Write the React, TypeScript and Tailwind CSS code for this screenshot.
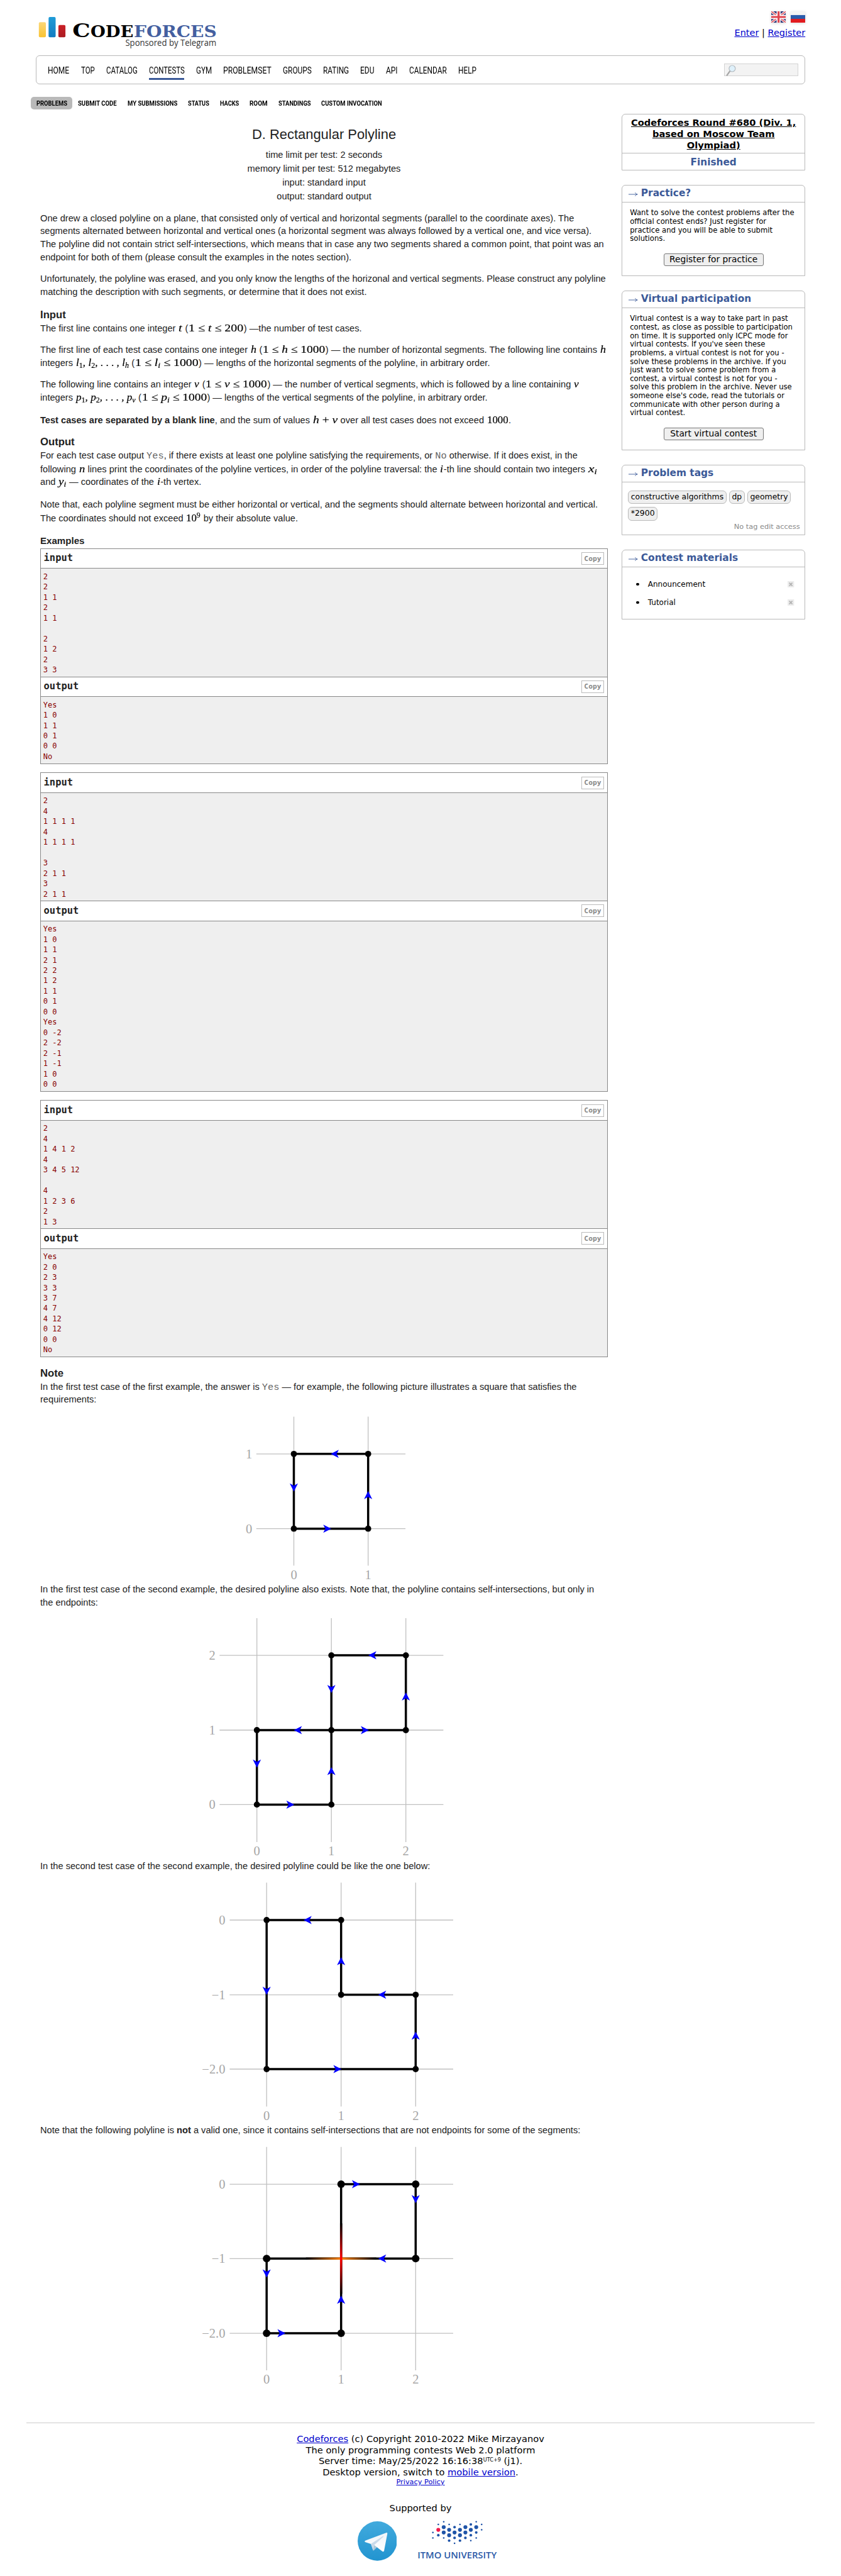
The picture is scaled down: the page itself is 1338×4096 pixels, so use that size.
import React, { useLayoutEffect, useRef, useState } from "react";
import type { ReactNode } from "react";

/* A run of text condensed or widened to an exact width. */
function Fit({ w, className = "", children }: { w: number; className?: string; children: ReactNode }) {
  const ref = useRef<HTMLSpanElement>(null);
  const [scale, setScale] = useState(1);
  useLayoutEffect(() => {
    if (ref.current) {
      const n = ref.current.getBoundingClientRect().width;
      if (n > 0) setScale(w / n);
    }
  }, [w]);
  return (
    <span className={"inline-block text-left whitespace-nowrap " + className} style={{ width: w }}>
      <span ref={ref} className="inline-block origin-left" style={{ transform: `scaleX(${scale})` }}>
        {children}
      </span>
    </span>
  );
}

function M({ w, children }: { w: number; children: ReactNode }) {
  return (
    <Fit w={w} className="mx-[0.6px] font-['Liberation_Serif',serif] text-[16.8px] leading-none text-black [-webkit-text-stroke:0.2px_black]">
      {children}
    </Fit>
  );
}
const Sub = ({ children }: { children: ReactNode }) => (
  <span className="relative top-[3px] text-[11.8px] leading-none">{children}</span>
);
const TT = ({ children }: { children: ReactNode }) => (
  <span className="font-['Liberation_Mono',monospace] text-[15.3px] leading-none text-[#666]">{children}</span>
);

function Line({ h = "h-[20.58px]", children }: { h?: string; children: ReactNode }) {
  return <div className={h + " whitespace-nowrap leading-[20.58px]"}>{children}</div>;
}
function Heading({ className = "", children }: { className?: string; children: ReactNode }) {
  return <h2 className={"h-5 text-[16.7px] leading-5 font-bold " + className}>{children}</h2>;
}

const NAV: [string, number][] = [
  ["HOME", 34.2], ["TOP", 21.7], ["CATALOG", 49.8], ["CONTESTS", 56.8], ["GYM", 25.1], ["PROBLEMSET", 76.7],
  ["GROUPS", 45.9], ["RATING", 41.2], ["EDU", 22.5], ["API", 18.6], ["CALENDAR", 59.8], ["HELP", 29],
];
const SUBNAV: [string, number][] = [
  ["SUBMIT CODE", 61.5], ["MY SUBMISSIONS", 79.3], ["STATUS", 33.8], ["HACKS", 30.3], ["ROOM", 28.6],
  ["STANDINGS", 51.6], ["CUSTOM INVOCATION", 96.6],
];

function Logo() {
  return (
    <svg width="290" height="60" viewBox="61 20 290 60" className="overflow-visible">
      <defs>
        <linearGradient id="ly" x1="0" y1="0" x2="0" y2="1"><stop offset="0" stopColor="#fbd778" /><stop offset="1" stopColor="#f9c332" /></linearGradient>
        <linearGradient id="lb" x1="0" y1="0" x2="0" y2="1"><stop offset="0" stopColor="#1f9cd8" /><stop offset="1" stopColor="#137bc0" /></linearGradient>
        <linearGradient id="lr" x1="0" y1="0" x2="0" y2="1"><stop offset="0" stopColor="#cb2027" /><stop offset="1" stopColor="#aa1c22" /></linearGradient>
      </defs>
      <rect x="61.8" y="35.2" width="11.2" height="24.1" rx="2" fill="url(#ly)" />
      <rect x="77.3" y="27" width="11.2" height="32.3" rx="2" fill="url(#lb)" />
      <rect x="92.9" y="39.7" width="11.2" height="19.6" rx="2" fill="url(#lr)" />
      <g fontFamily="'DejaVu Serif', serif" fontWeight="bold">
        <text x="115.2" y="58.7" fontSize="30.5" textLength="28.5" lengthAdjust="spacingAndGlyphs">C</text>
        <text x="144" y="58.7" fontSize="25.6" textLength="68.4" lengthAdjust="spacingAndGlyphs">ODE</text>
        <text x="213" y="58.7" fontSize="25.6" fill="#445fa0" textLength="131.8" lengthAdjust="spacingAndGlyphs">FORCES</text>
      </g>
      <text x="199.4" y="73.2" fontSize="13.9" fill="#333" fontFamily="'Open Sans', sans-serif" textLength="144.8" lengthAdjust="spacingAndGlyphs">Sponsored by Telegram</text>
    </svg>
  );
}

function Flags() {
  return (
    <div className="flex gap-[7.4px]">
      <svg width="23.4" height="18" viewBox="0 0 26 20" className="drop-shadow-sm">
        <rect width="26" height="20" fill="#2b3577" />
        <path d="M0 0L26 20M26 0L0 20" stroke="#f3e6ea" strokeWidth="4.4" />
        <path d="M0 0L26 20M26 0L0 20" stroke="#e0525c" strokeWidth="1.6" />
        <path d="M13 0V20M0 10H26" stroke="#fff" strokeWidth="7" />
        <path d="M13 0V20M0 10H26" stroke="#e0444f" strokeWidth="3.6" />
      </svg>
      <svg width="23.4" height="18" viewBox="0 0 26 20" className="drop-shadow-sm">
        <rect width="26" height="7" fill="#f4f4f4" />
        <rect y="6.6" width="26" height="7" fill="#2a5cab" />
        <rect y="13.3" width="26" height="6.7" fill="#e21b1f" />
      </svg>
    </div>
  );
}

function Pre({ text }: { text: string }) {
  return (
    <pre className="bg-[#efefef] pt-[4.6px] pb-[2.2px] pl-[3.8px] font-['DejaVu_Sans_Mono',monospace] text-[12px] leading-[16.45px] text-[#880000]">
      {text}
    </pre>
  );
}
function BoxTitle({ children }: { children: ReactNode }) {
  return (
    <div className="flex h-[32.4px] items-center justify-between border-y border-[#888] pr-[5.3px] pl-[4.6px]">
      <span className="font-['DejaVu_Sans_Mono',monospace] text-[15.4px] leading-none font-bold">{children}</span>
      <span className="flex h-[19.8px] w-[35.5px] items-center justify-center border border-[#bbb] font-['DejaVu_Sans_Mono',monospace] text-[11.3px] leading-none font-bold text-[#888]">
        Copy
      </span>
    </div>
  );
}
function Example({ input, output }: { input: string; output: string }) {
  return (
    <div className="mb-[13.9px] border-x border-b border-[#888]">
      <BoxTitle>input</BoxTitle>
      <Pre text={input} />
      <BoxTitle>output</BoxTitle>
      <Pre text={output} />
    </div>
  );
}

type Pt = [number, number];
interface PlotProps {
  top: number;
  h: number;
  xs: number[];
  ys: number[];
  x0: number;
  x1: number;
  y0: number;
  y1: number;
  yLabels: string[];
  yLabelX: number;
  xLabelY: number;
  segs: [Pt, Pt][];
  dots: Pt[];
  r?: number;
  at?: number;
  cross?: boolean;
}
function Plot(p: PlotProps) {
  const { r = 4.9, at = 0.5 } = p;
  const pt = (q: Pt): Pt => [p.xs[q[0]], p.ys[q[1]]];
  return (
    <svg className="block" width="903" height={p.h} viewBox={`64 ${p.top} 903 ${p.h}`}>
      {p.xs.map((x, i) => <line key={i} x1={x} x2={x} y1={p.y0} y2={p.y1} stroke="#c0c0c0" strokeWidth="1.3" />)}
      {p.ys.map((y, i) => <line key={i} x1={p.x0} x2={p.x1} y1={y} y2={y} stroke="#c0c0c0" strokeWidth="1.3" />)}
      <g fontFamily="'Liberation Serif', serif" fontSize="20.5" fill="#a6a6a6">
        {p.xs.map((x, i) => <text key={i} x={x} y={p.xLabelY} textAnchor="middle">{i}</text>)}
        {p.ys.map((y, i) => <text key={i} x={p.yLabelX} y={y + 7} textAnchor="end">{p.yLabels[i]}</text>)}
      </g>
      {p.segs.map(([a, b], i) => {
        const [ax, ay] = pt(a);
        const [bx, by] = pt(b);
        return <line key={i} x1={ax} y1={ay} x2={bx} y2={by} stroke="#000" strokeWidth="3.5" />;
      })}
      {p.cross && (
        <>
          <defs>
            <linearGradient id="co" gradientUnits="userSpaceOnUse" x1={p.xs[1] - 56} x2={p.xs[1] + 56} y1="0" y2="0">
              <stop offset="0" stopColor="#000" /><stop offset="0.5" stopColor="#ff8000" /><stop offset="1" stopColor="#000" />
            </linearGradient>
            <linearGradient id="cr" gradientUnits="userSpaceOnUse" y1={p.ys[1] - 56} y2={p.ys[1] + 56} x1="0" x2="0">
              <stop offset="0" stopColor="#000" /><stop offset="0.5" stopColor="#ff0000" /><stop offset="1" stopColor="#000" />
            </linearGradient>
          </defs>
          <rect x={p.xs[1] - 56} y={p.ys[1] - 1.75} width="112" height="3.5" fill="url(#co)" />
          <rect x={p.xs[1] - 1.75} y={p.ys[1] - 56} width="3.5" height="112" fill="url(#cr)" />
        </>
      )}
      {p.dots.map((d, i) => <circle key={i} cx={pt(d)[0]} cy={pt(d)[1]} r={r} />)}
      {p.segs.map(([a, b], i) => {
        const [ax, ay] = pt(a);
        const [bx, by] = pt(b);
        const ang = (Math.atan2(by - ay, bx - ax) * 180) / Math.PI;
        return (
          <path
            key={i}
            fill="#0000ff"
            d="M0.5 0L-12.4 6.5L-9 0L-12.4 -6.5Z"
            transform={`translate(${ax + (bx - ax) * at} ${ay + (by - ay) * at}) rotate(${ang})`}
          />
        );
      })}
    </svg>
  );
}

function SideBox({ title, h, children }: { title: string; h: string; children: ReactNode }) {
  return (
    <section className={"mb-[22.6px] rounded-t-[6px] border border-[#b9b9b9] " + h}>
      <div className="flex h-[27.4px] items-center border-b border-[#b9b9b9] pl-[8.4px] text-[#3b5998]">
        <svg width="17" height="10" viewBox="0 0 17 10" fill="none" stroke="currentColor" strokeWidth="0.9" className="mt-[3px]">
          <path d="M1 5H15M11.6 2.2C12.3 4 13.6 4.8 15.2 5C13.6 5.2 12.3 6 11.6 7.8" />
        </svg>
        <span className="ml-[4.2px] text-[15.4px] leading-none font-bold">{title}</span>
      </div>
      {children}
    </section>
  );
}
function SideLines({ lines }: { lines: string[] }) {
  return (
    <div className="pt-[10.2px] pl-[12px] text-[11.67px] leading-[13.64px]">
      {lines.map((l) => <div key={l} className="whitespace-nowrap">{l}</div>)}
    </div>
  );
}
const SideButton = ({ children }: { children: ReactNode }) => (
  <div className="mx-auto flex h-[20.2px] w-[159px] items-center justify-center rounded-[3px] border border-[#767676] bg-[#efefef] text-[13.8px] leading-none whitespace-nowrap">
    {children}
  </div>
);
const Tag = ({ children }: { children: ReactNode }) => (
  <span className="flex h-[21.6px] items-center rounded-[6px] border border-[#b9b9b9] bg-[#efefef] px-[3.5px] text-[12.46px] leading-none whitespace-nowrap">
    {children}
  </span>
);
const Material = ({ children }: { children: ReactNode }) => (
  <li className="flex h-[29px] items-center pr-[16.7px] pl-[22px] text-[12px] leading-none">
    <span className="mr-[14.2px] size-[4.4px] rounded-full bg-black" />
    <span className="flex-1">{children}</span>
    <svg width="10.3" height="10.3" viewBox="0 0 10 10">
      <rect width="10" height="10" fill="#ececec" />
      <path d="M2.6 2.6L7.4 7.4M7.4 2.6L2.6 7.4" stroke="#b4b4b4" strokeWidth="1.8" />
    </svg>
  </li>
);

const ITMO: [number, number, number][] = [
  [0, 4, 1.3], [0, 6, 1.3], [1, 1, 1.3], [1, 3, 3.1], [1, 5, 2.1], [2, 0, 1.3], [2, 2, 3.1], [2, 4, 3.1], [2, 6, 1.3],
  [3, 1, 1.3], [3, 3, 3.1], [3, 5, 3.1], [3, 7, 2.1], [4, 2, 2.1], [4, 4, 3.1], [4, 6, 2.1], [4, 8, 1.3], [5, 1, 1.3],
  [5, 3, 3.1], [5, 5, 3.1], [5, 7, 2.1], [6, 2, 3.1], [6, 4, 3.1], [6, 6, 2.1], [7, 1, 2.1], [7, 3, 3.1], [7, 5, 2.1],
  [7, 7, 1.3], [8, 0, 1.3], [8, 2, 3.1], [8, 4, 2.1], [8, 6, 1.3], [9, 1, 1.3], [9, 3, 1.3],
];

const A = ({ children }: { children: ReactNode }) => <a className="text-[#0000cc] underline">{children}</a>;

export default function App() {
  return (
    <div className="h-[4096px] w-[1338px] overflow-hidden bg-white font-['DejaVu_Sans',sans-serif] text-black">
      <header className="flex h-[88px] justify-between pr-[56.8px] pl-[61px]">
        <div className="pt-[20px]"><Logo /></div>
        <div className="flex flex-col items-end pt-[18.1px]">
          <Flags />
          <div className="mt-[8.2px] text-[14.5px] leading-[16.8px] whitespace-nowrap">
            <A>Enter</A> | <A>Register</A>
          </div>
        </div>
      </header>

      <nav className="mr-[56.8px] ml-[56.9px] flex h-[45.5px] justify-between rounded-[6px] border border-[#b9b9b9] pr-[10.3px] pl-[18.5px]">
        <div className="flex gap-[18.2px] pt-[13.1px] font-[Roboto] text-[15px] leading-[20px]">
          {NAV.map(([t, w]) => (
            <div key={t} className={t === "CONTESTS" ? "h-[24.5px] border-b-[3px] border-[#3b5998]" : ""}>
              <Fit w={w}>{t}</Fit>
            </div>
          ))}
        </div>
        <div className="mt-[11.6px] h-[20.8px] w-[118px] border border-[#d3d3d3] bg-[#f3f3f3] pl-[2px]">
          <svg width="17" height="19" viewBox="0 0 17 19">
            <path d="M1.6 17.6L6.6 10.6" stroke="#a5a5a5" strokeWidth="2.2" strokeLinecap="round" />
            <circle cx="9.9" cy="7" r="5" fill="#dff1fb" stroke="#b4bcc2" strokeWidth="1.2" />
          </svg>
        </div>
      </nav>

      <div className="mt-[20.3px] ml-[49.1px] flex h-[20.7px] items-center gap-[17px] font-[Roboto] text-[11.6px] leading-[20.7px] font-bold">
        <div className="-mr-[8px] h-[20.7px] rounded-[5px] bg-[#b9b9b9] px-[8.5px]"><Fit w={49}>PROBLEMS</Fit></div>
        {SUBNAV.map(([t, w]) => <Fit key={t} w={w}>{t}</Fit>)}
      </div>

      <div className="mt-[6.5px] flex h-[3671.4px]">
        <main className="ml-[64px] w-[903px] shrink-0 pt-[21.2px] font-['Liberation_Sans',sans-serif] text-[14.63px] text-[#222]">
          <h1 className="h-[33px] text-center text-[21.95px] leading-[24px]">D. Rectangular Polyline</h1>
          <div className="mb-[13.6px] text-center leading-[22px]">
            <div>time limit per test: 2 seconds</div>
            <div>memory limit per test: 512 megabytes</div>
            <div>input: standard input</div>
            <div>output: standard output</div>
          </div>

          <div className="mb-[14px]">
            <Line>One drew a closed polyline on a plane, that consisted only of vertical and horizontal segments (parallel to the coordinate axes). The</Line>
            <Line>segments alternated between horizontal and vertical ones (a horizontal segment was always followed by a vertical one, and vice versa).</Line>
            <Line>The polyline did not contain strict self-intersections, which means that in case any two segments shared a common point, that point was an</Line>
            <Line>endpoint for both of them (please consult the examples in the notes section).</Line>
          </div>
          <div>
            <Line>Unfortunately, the polyline was erased, and you only know the lengths of the horizonal and vertical segments. Please construct any polyline</Line>
            <Line>matching the description with such segments, or determine that it does not exist.</Line>
          </div>

          <Heading className="mt-[16.4px] mb-[1px]">Input</Heading>
          <Line>The first line contains one integer <M w={5.7}><i>t</i></M> (<M w={87.3}>1 ≤ <i>t</i> ≤ 200</M>) —the number of test cases.</Line>
          <div className="mt-[14.1px]">
            <Line>The first line of each test case contains one integer <M w={9}><i>h</i></M> (<M w={99.3}>1 ≤ <i>h</i> ≤ 1000</M>) — the number of horizontal segments. The following line contains <M w={9}><i>h</i></M></Line>
            <Line>integers <M w={84}><i>l</i><Sub>1</Sub>, <i>l</i><Sub>2</Sub>, . . . , <i>l</i><Sub><i>h</i></Sub></M> (<M w={100.7}>1 ≤ <i>l</i><Sub><i>i</i></Sub> ≤ 1000</M>) — lengths of the horizontal segments of the polyline, in arbitrary order.</Line>
          </div>
          <div className="mt-[13.8px]">
            <Line>The following line contains an integer <M w={7.7}><i>v</i></M> (<M w={97.7}>1 ≤ <i>v</i> ≤ 1000</M>) — the number of vertical segments, which is followed by a line containing <M w={7.7}><i>v</i></M></Line>
            <Line>integers <M w={94.7}><i>p</i><Sub>1</Sub>, <i>p</i><Sub>2</Sub>, . . . , <i>p</i><Sub><i>v</i></Sub></M> (<M w={103.3}>1 ≤ <i>p</i><Sub><i>i</i></Sub> ≤ 1000</M>) — lengths of the vertical segments of the polyline, in arbitrary order.</Line>
          </div>
          <div className="mt-[15.5px]">
            <Line><b>Test cases are separated by a blank line</b>, and the sum of values <M w={39.3}><i>h</i> + <i>v</i></M> over all test cases does not exceed <M w={33.7}>1000</M>.</Line>
          </div>

          <Heading className="mt-[15px] mb-[0.7px]">Output</Heading>
          <Line h="h-[22px]">For each test case output <TT>Yes</TT>, if there exists at least one polyline satisfying the requirements, or <TT>No</TT> otherwise. If it does exist, in the</Line>
          <Line h="h-[19.7px]">following <M w={9.3}><i>n</i></M> lines print the coordinates of the polyline vertices, in order of the polyline traversal: the <M w={5}><i>i</i></M>-th line should contain two integers <M w={13.7}><i>x</i><Sub><i>i</i></Sub></M></Line>
          <Line>and <M w={12.3}><i>y</i><Sub><i>i</i></Sub></M> — coordinates of the <M w={5}><i>i</i></M>-th vertex.</Line>
          <div className="mt-[15.1px]">
            <Line h="h-[22.3px]">Note that, each polyline segment must be either horizontal or vertical, and the segments should alternate between horizontal and vertical.</Line>
            <Line>The coordinates should not exceed <M w={22.7}>10<span className="relative -top-[6px] text-[11.8px] leading-none">9</span></M> by their absolute value.</Line>
          </div>

          <h2 className="mt-[15.7px] h-[21.9px] text-[15.09px] leading-5 font-bold">Examples</h2>
          <Example input={"2\n2\n1 1\n2\n1 1\n\n2\n1 2\n2\n3 3"} output={"Yes\n1 0\n1 1\n0 1\n0 0\nNo"} />
          <Example
            input={"2\n4\n1 1 1 1\n4\n1 1 1 1\n\n3\n2 1 1\n3\n2 1 1"}
            output={"Yes\n1 0\n1 1\n2 1\n2 2\n1 2\n1 1\n0 1\n0 0\nYes\n0 -2\n2 -2\n2 -1\n1 -1\n1 0\n0 0"}
          />
          <Example
            input={"2\n4\n1 4 1 2\n4\n3 4 5 12\n\n4\n1 2 3 6\n2\n1 3"}
            output={"Yes\n2 0\n2 3\n3 3\n3 7\n4 7\n4 12\n0 12\n0 0\nNo"}
          />

          <Heading className="mt-[16px] mb-[0.7px]">Note</Heading>
          <Line>In the first test case of the first example, the answer is <TT>Yes</TT> — for example, the following picture illustrates a square that satisfies the</Line>
          <Line>requirements:</Line>
          <Plot
            top={2236.8} h={281.5} xs={[467.5, 585.7]} ys={[2431.5, 2312.6]} x0={407.8} x1={645.1} y0={2253.4} y1={2490.2}
            yLabels={["0", "1"]} yLabelX={401.3} xLabelY={2512.3}
            segs={[[[0, 0], [1, 0]], [[1, 0], [1, 1]], [[1, 1], [0, 1]], [[0, 1], [0, 0]]]}
            dots={[[0, 0], [1, 0], [1, 1], [0, 1]]}
          />
          <Line>In the first test case of the second example, the desired polyline also exists. Note that, the polyline contains self-intersections, but only in</Line>
          <Line>the endpoints:</Line>
          <Plot
            top={2559.5} h={399.1} xs={[408.7, 527.2, 645.7]} ys={[2870.9, 2752.5, 2633.6]} x0={349.3} x1={705.4} y0={2574.5} y1={2930.5}
            yLabels={["0", "1", "2"]} yLabelX={342.8} xLabelY={2951.8}
            segs={[
              [[0, 0], [1, 0]], [[1, 0], [1, 1]], [[1, 1], [2, 1]], [[2, 1], [2, 2]],
              [[2, 2], [1, 2]], [[1, 2], [1, 1]], [[1, 1], [0, 1]], [[0, 1], [0, 0]],
            ]}
            dots={[[0, 0], [1, 0], [1, 1], [2, 1], [2, 2], [1, 2], [0, 1]]}
          />
          <Line>In the second test case of the second example, the desired polyline could be like the one below:</Line>
          <Plot
            top={2979.2} h={398.9} xs={[424.2, 542.7, 661.3]} ys={[3054.2, 3173, 3291.2]} x0={365.4} x1={721} y0={2994.8} y1={3350.6}
            yLabels={["0", "−1", "−2.0"]} yLabelX={358.5} xLabelY={3372}
            segs={[
              [[0, 2], [2, 2]], [[2, 2], [2, 1]], [[2, 1], [1, 1]], [[1, 1], [1, 0]], [[1, 0], [0, 0]], [[0, 0], [0, 2]],
            ]}
            dots={[[0, 2], [2, 2], [2, 1], [1, 1], [1, 0], [0, 0]]}
          />
          <Line>Note that the following polyline is <b>not</b> a valid one, since it contains self-intersections that are not endpoints for some of the segments:</Line>
          <Plot
            top={3398.7} h={440} xs={[424.2, 542.7, 661.3]} ys={[3473.8, 3592, 3710.8]} x0={365.4} x1={721} y0={3414.4} y1={3769.6}
            yLabels={["0", "−1", "−2.0"]} yLabelX={358.5} xLabelY={3791}
            segs={[
              [[0, 2], [1, 2]], [[1, 2], [1, 0]], [[1, 0], [2, 0]], [[2, 0], [2, 1]], [[2, 1], [0, 1]], [[0, 1], [0, 2]],
            ]}
            dots={[[0, 2], [1, 2], [1, 0], [2, 0], [2, 1], [0, 1]]}
            r={6} at={0.25} cross
          />
        </main>

        <aside className="ml-[22.2px] w-[292px] shrink-0">
          <section className="mb-[22.6px] h-[90.1px] rounded-t-[6px] border border-[#b9b9b9] text-center font-bold">
            <div className="h-[61.7px] border-b border-[#b9b9b9] pt-[4.2px] text-[14.7px] leading-[17.8px] underline">
              <div>Codeforces Round #680 (Div. 1,</div>
              <div>based on Moscow Team</div>
              <div>Olympiad)</div>
            </div>
            <div className="pt-[1px] text-[15.3px] leading-[26px] text-[#3b5998]">Finished</div>
          </section>

          <SideBox title="Practice?" h="h-[145.5px]">
            <SideLines
              lines={["Want to solve the contest problems after the", "official contest ends? Just register for", "practice and you will be able to submit", "solutions."]}
            />
            <div className="pt-[16px]"><SideButton>Register for practice</SideButton></div>
          </SideBox>

          <SideBox title="Virtual participation" h="h-[254.2px]">
            <SideLines
              lines={[
                "Virtual contest is a way to take part in past", "contest, as close as possible to participation", "on time. It is supported only ICPC mode for",
                "virtual contests. If you've seen these", "problems, a virtual contest is not for you -", "solve these problems in the archive. If you",
                "just want to solve some problem from a", "contest, a virtual contest is not for you -", "solve this problem in the archive. Never use",
                "someone else's code, read the tutorials or", "communicate with other person during a", "virtual contest.",
              ]}
            />
            <div className="pt-[16px]"><SideButton>Start virtual contest</SideButton></div>
          </SideBox>

          <SideBox title="Problem tags" h="h-[112.4px]">
            <div className="flex flex-wrap gap-x-[4.2px] gap-y-[4.7px] pt-[12.7px] pl-[9px]">
              <Tag>constructive algorithms</Tag>
              <Tag>dp</Tag>
              <Tag>geometry</Tag>
              <Tag>*2900</Tag>
            </div>
            <div className="pt-[2.3px] pr-[7.6px] text-right text-[11.35px] leading-[14px] text-[#888]">No tag edit access</div>
          </SideBox>

          <SideBox title="Contest materials" h="h-[111.3px]">
            <ul className="pt-[12.6px]">
              <Material>Announcement</Material>
              <Material>Tutorial</Material>
            </ul>
          </SideBox>
        </aside>
      </div>

      <footer className="mx-[42px] border-t border-[#ccc] pt-[15.5px] text-center text-[14.65px] leading-[17.7px]">
        <div><A>Codeforces</A> (c) Copyright 2010-2022 Mike Mirzayanov</div>
        <div>The only programming contests Web 2.0 platform</div>
        <div className="h-[17.7px]">Server time: May/25/2022 16:16:38<span className="relative -top-[4.5px] text-[8.2px] leading-none">UTC+9</span> (j1).</div>
        <div>Desktop version, switch to <A>mobile version</A>.</div>
        <div className="mt-[0.5px] text-[11.3px] leading-[13px]"><A>Privacy Policy</A></div>
        <div className="mt-[25.8px]">Supported by</div>
        <div className="mt-[10px] flex items-start pl-[526.7px]">
          <svg width="62.7" height="62.7" viewBox="0 0 240 240" className="mt-[2.2px]">
            <defs>
              <linearGradient id="tg" x1="0" y1="0" x2="0" y2="1"><stop offset="0" stopColor="#41aadd" /><stop offset="1" stopColor="#2294d0" /></linearGradient>
              <linearGradient id="tp" x1="0" y1="0" x2="0" y2="1"><stop offset="0" stopColor="#eef4f9" /><stop offset="1" stopColor="#fff" /></linearGradient>
            </defs>
            <circle cx="120" cy="120" r="120" fill="url(#tg)" />
            <path d="M80 135L94 177Q97 180 100 176L118 158L100 140Z" fill="#a9c6d8" />
            <path d="M174 70Q182 66 181 76L161 180Q158 188 150 183L99 144L80 138L45 126Q40 122 46 118Z" fill="url(#tp)" />
            <path d="M80 138L152 92Q160 88 157 94L101 145L95 178Z" fill="#c8daea" />
          </svg>
          <svg width="127" height="64" viewBox="664 4007 127 64" className="ml-[32.5px]">
            {ITMO.map(([c, r, s], i) => (
              <circle key={i} cx={688.7 + c * 8.62} cy={4009.7 + r * 4.29} r={s} fill={s > 3 && c === 1 ? "#f0184c" : "#1f54a8"} />
            ))}
            <text x="664.2" y="4068.4" fontSize="14.8" fontFamily="'Open Sans', sans-serif" fontWeight="600" fill="#2a59a8" textLength="126" lengthAdjust="spacingAndGlyphs">ITMO UNIVERSITY</text>
          </svg>
        </div>
      </footer>
    </div>
  );
}
